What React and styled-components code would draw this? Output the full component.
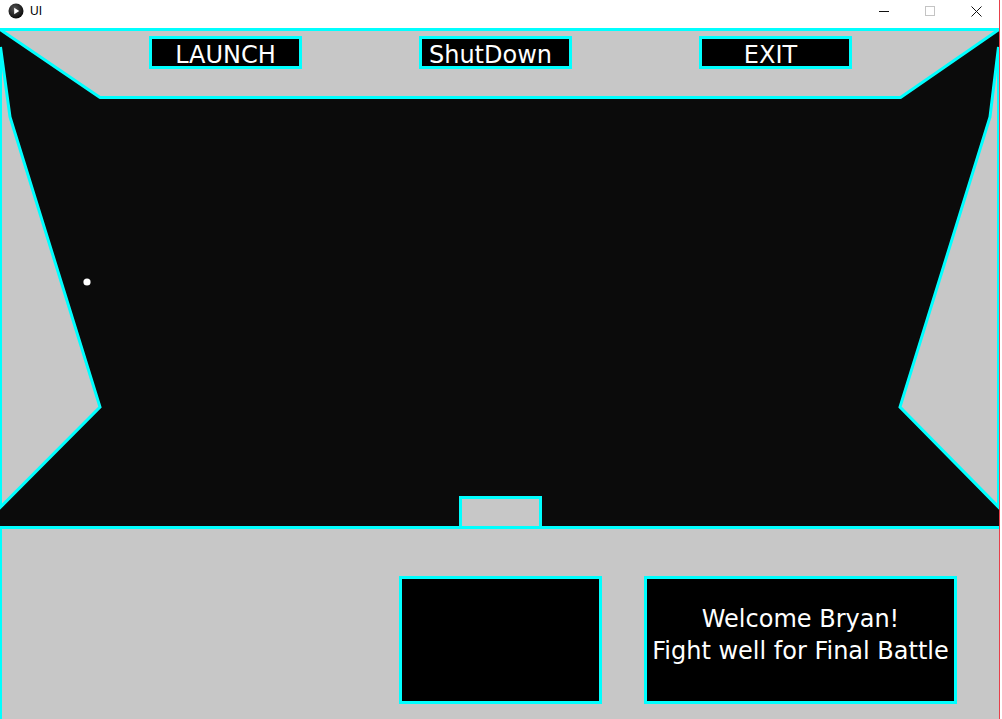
import styled, { createGlobalStyle } from "styled-components";

const CYAN = "#00ffff";
const GRAY = "#c7c7c7";

const GlobalStyle = createGlobalStyle`
  html, body {
    margin: 0;
    padding: 0;
    background: #ffffff;
  }
  body {
    font-family: "DejaVu Sans", "Noto Sans", sans-serif;
  }
`;

const App = () => {
  return (
    <>
      <GlobalStyle />
      <Window>
        <TitleBar>
          <TitleLeft>
            <AppIcon width="16" height="16" viewBox="0 0 16 16">
              <defs>
                <radialGradient id="ball" cx="0.4" cy="0.35" r="0.7">
                  <stop offset="0" stopColor="#555" />
                  <stop offset="1" stopColor="#050505" />
                </radialGradient>
              </defs>
              <circle cx="8" cy="8" r="7.5" fill="url(#ball)" />
              <path d="M6.2 4.8 L11.2 8 L6.2 11.2 Z" fill="#fff" />
            </AppIcon>
            <TitleText>UI</TitleText>
          </TitleLeft>
          <Controls>
            <Control>
              <svg width="10" height="10" viewBox="0 0 10 10">
                <rect x="0" y="5" width="10" height="1" fill="#111" />
              </svg>
            </Control>
            <Control>
              <svg width="10" height="10" viewBox="0 0 10 10">
                <rect x="0.5" y="0.5" width="9" height="9" fill="none" stroke="#c4c4c4" />
              </svg>
            </Control>
            <Control>
              <svg width="11" height="11" viewBox="0 0 11 11">
                <path d="M0.5 0.5 L10.5 10.5 M10.5 0.5 L0.5 10.5" stroke="#111" strokeWidth="1" />
              </svg>
            </Control>
          </Controls>
        </TitleBar>

        <Stage>
          {/* game field drawing */}
          <Field viewBox="0 28 999 691">
            <rect x="0" y="29" width="999" height="499" fill="#0b0b0b" />
            <polygon
              points="0,29.5 999,29.5 900.5,97.5 100,97.5"
              fill={GRAY}
              stroke={CYAN}
              strokeWidth="3"
              strokeLinejoin="bevel"
            />
            <line x1="0" y1="29.5" x2="999" y2="29.5" stroke={CYAN} strokeWidth="3" />
            <polygon
              points="0.5,47 10,117 100,407 0.5,507"
              fill={GRAY}
              stroke={CYAN}
              strokeWidth="3"
            />
            <polygon
              points="998.5,47 990,117 900,407 998.5,507"
              fill={GRAY}
              stroke={CYAN}
              strokeWidth="3"
            />
            <rect x="460.5" y="497.5" width="80" height="30" fill={GRAY} stroke={CYAN} strokeWidth="3" />
            <line x1="0" y1="527.5" x2="999" y2="527.5" stroke={CYAN} strokeWidth="3" />
            <line x1="0.5" y1="527" x2="0.5" y2="719" stroke={CYAN} strokeWidth="3" />
            <circle cx="87" cy="282" r="3.6" fill="#fff" />
          </Field>

          <ButtonRow>
            <HudButton>LAUNCH</HudButton>
            <HudButton $gap={117} $nudge={10}>ShutDown</HudButton>
            <HudButton $gap={127} $nudge={10}>EXIT</HudButton>
          </ButtonRow>

          <PanelRow>
            <Panel $w={203} />
            <Panel $w={313}>
              Welcome Bryan!
              <br />
              Fight well for Final Battle
            </Panel>
          </PanelRow>
        </Stage>
      </Window>
    </>
  );
};

export default App;

const Window = styled.div`
  width: 1000px;
  height: 719px;
  box-sizing: border-box;
  border-right: 1px solid #e8404a;
  display: flex;
  flex-direction: column;
  overflow: hidden;
`;

const TitleBar = styled.div`
  height: 28px;
  flex-shrink: 0;
  background: #ffffff;
  display: flex;
  align-items: flex-start;
  justify-content: space-between;
`;

const TitleLeft = styled.div`
  height: 22px;
  display: flex;
  align-items: center;
  padding-left: 8px;
  gap: 6px;
`;

const AppIcon = styled.svg`
  display: block;
`;

const TitleText = styled.span`
  font-family: "Liberation Sans", Arial, sans-serif;
  font-size: 12px;
  line-height: 16px;
  color: #000;
`;

const Controls = styled.div`
  display: flex;
`;

const Control = styled.div`
  width: 46px;
  height: 22px;
  display: flex;
  align-items: center;
  justify-content: center;

  svg {
    display: block;
  }
`;

const Stage = styled.div`
  position: relative;
  flex: 1;
  background: ${GRAY};
  display: flex;
  flex-direction: column;
  justify-content: space-between;
`;

const Field = styled.svg`
  position: absolute;
  inset: 0;
  width: 100%;
  height: 100%;
  display: block;
`;

const ButtonRow = styled.div`
  position: relative;
  display: flex;
  padding: 8px 0 0 149px;
`;

const HudButton = styled.div`
  width: 153px;
  height: 33px;
  box-sizing: border-box;
  margin-left: ${(p) => p.$gap || 0}px;
  padding-right: ${(p) => p.$nudge || 0}px;
  border: 3px solid ${CYAN};
  background: #000;
  color: #fff;
  font-size: 24px;
  line-height: 32px;
  text-align: center;
  white-space: nowrap;
  overflow: visible;
`;

const PanelRow = styled.div`
  position: relative;
  display: flex;
  gap: 42px;
  padding: 0 0 15px 399px;
`;

const Panel = styled.div`
  width: ${(p) => p.$w}px;
  height: 128px;
  box-sizing: border-box;
  border: 3px solid ${CYAN};
  background: #000;
  color: #fff;
  display: flex;
  flex-direction: column;
  justify-content: center;
  padding-bottom: 10px;
  font-size: 24px;
  line-height: 32px;
  text-align: center;
  white-space: nowrap;
`;
